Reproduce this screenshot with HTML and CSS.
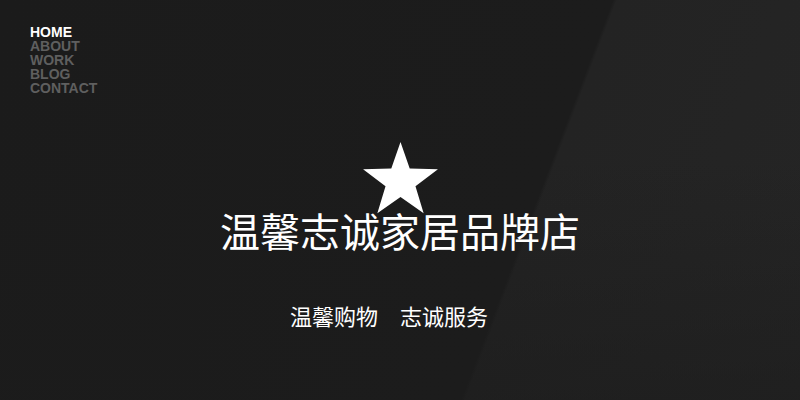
FILE: index.html
```html
<!DOCTYPE html>
<html lang="zh-CN">
<head>
<meta charset="utf-8">
<title>温馨志诚家居品牌店</title>
<link rel="stylesheet" href="styles.css">
</head>
<body>
<div class="page">
  <nav class="nav">
    <ul>
      <li class="active">HOME</li>
      <li>ABOUT</li>
      <li>WORK</li>
      <li>BLOG</li>
      <li>CONTACT</li>
    </ul>
  </nav>
  <main class="hero">
    <svg class="star" width="79" height="72" viewBox="-41 -41 82 75">
      <polygon fill="#ffffff" points="0,-41 9.6,-13.3 39,-12.7 15.6,5.1 24.1,33.2 0,16.4 -24.1,33.2 -15.6,5.1 -39,-12.7 -9.6,-13.3"/>
    </svg>
    <h1 class="title">温馨志诚家居品牌店</h1>
    <p class="subtitle">温馨购物　志诚服务</p>
  </main>
</div>
</body>
</html>
```

FILE: styles.css
```css
html, body {
  margin: 0;
  padding: 0;
}
body {
  width: 800px;
  height: 400px;
  overflow: hidden;
  background: #1c1c1c;
}
.page {
  width: 800px;
  height: 400px;
  background:
    linear-gradient(180deg, rgba(0,0,0,0) 40%, rgba(28,28,28,0.6) 100%),
    linear-gradient(110.8deg, #1b1b1b 0%, #1c1c1c 64.4%, #232323 64.8%, #252525 100%);
  font-family: "Liberation Sans", Arial, sans-serif;
}
.nav {
  padding: 25px 0 0 30px;
}
.nav ul {
  list-style: none;
  margin: 0;
  padding: 0;
}
.nav li {
  font-size: 14px;
  line-height: 14px;
  font-weight: bold;
  color: #5f5f5f;
}
.nav li.active {
  color: #ffffff;
}
.hero {
  display: flex;
  flex-direction: column;
  align-items: center;
  padding-top: 47px;
}
.star {
  display: block;
}
.title {
  margin: -4px 0 0 0;
  font-family: "Noto Sans CJK SC", "Liberation Sans", sans-serif;
  font-weight: normal;
  font-size: 40px;
  line-height: 40px;
  color: #ffffff;
}
.subtitle {
  margin: 53px 0 0 0;
  padding-right: 22px;
  font-family: "Noto Sans CJK SC", "Liberation Sans", sans-serif;
  font-size: 22px;
  line-height: 24px;
  color: #ffffff;
}
```
